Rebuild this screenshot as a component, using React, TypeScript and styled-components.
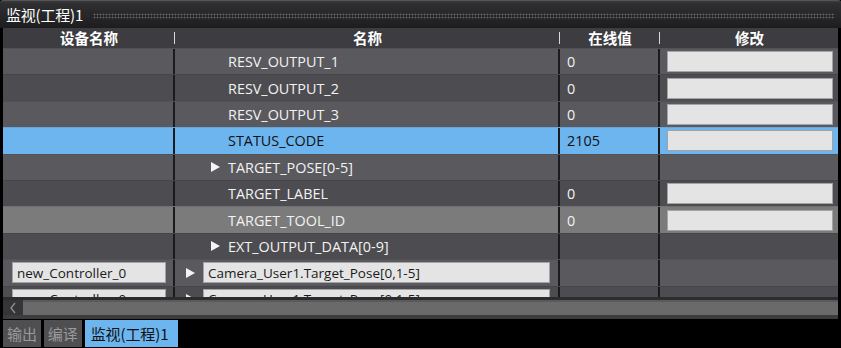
import React from "react";
import styled, { createGlobalStyle, css } from "styled-components";

const Global = createGlobalStyle`
  html, body { margin: 0; padding: 0; background: #000; }
  body { font-family: "Open Sans", "Noto Sans CJK SC", sans-serif; }
  * { box-sizing: border-box; }
`;

const Window = styled.div`
  width: 841px;
  height: 348px;
  background: #000;
  display: flex;
  flex-direction: column;
  overflow: hidden;
`;

const TitleBar = styled.div`
  height: 28px;
  display: flex;
  align-items: center;
  gap: 10px;
  padding: 0 6px 0 6px;
  background: linear-gradient(#3a3a3c 0px, #2e2e30 3px, #262628 16px, #1c1c1e 28px);
  border-top: 1px solid #555;
  border-radius: 3px 3px 0 0;
`;

const TitleText = styled.span`
  color: #fff;
  font-family: "Noto Sans CJK SC", sans-serif;
  font-size: 15px;
  line-height: 1;
  letter-spacing: -0.2px;
  white-space: nowrap;
`;

const Dots = styled.div`
  flex: 1;
  height: 6px;
  margin-top: 2px;
  background-image: radial-gradient(circle, #6a6a6c 0.8px, transparent 1.1px);
  background-size: 3px 3px;
`;

const Grid = styled.div`
  height: 269px;
  margin: 0 3px;
  background: #4d4d51;
  overflow: hidden;
`;

const cols = "172px 385px 100px 179px";

const HeaderRow = styled.div`
  display: grid;
  grid-template-columns: ${cols};
  height: 20px;
  background: #3c3c41;
`;

const HeaderCell = styled.div<{ $sep?: boolean }>`
  position: relative;
  display: flex;
  align-items: center;
  justify-content: center;
  color: #fff;
  font-family: "Noto Sans CJK SC", sans-serif;
  font-weight: 700;
  font-size: 14.5px;
  line-height: 1;
  ${(p) =>
    p.$sep &&
    css`
      &::after {
        content: "";
        position: absolute;
        right: 0;
        top: 4px;
        width: 1px;
        height: 12px;
        background: #d8d8d8;
      }
    `}
`;

type Tone = "light" | "dark" | "sel" | "hover";
const bg: Record<Tone, string> = {
  light: "#5a595e",
  dark: "#4d4d51",
  sel: "#6db5ef",
  hover: "#7b7b7c",
};

const Row = styled.div<{ $tone: Tone }>`
  display: grid;
  grid-template-columns: ${cols};
  height: 26.4px;
  background: ${(p) => bg[p.$tone]};
  color: ${(p) => (p.$tone === "sel" ? "#111" : "#f2f2f2")};
  border-top: 1px solid rgba(0, 0, 0, 0.08);
`;

const Cell = styled.div<{ $divider?: boolean; $indent?: number }>`
  display: flex;
  align-items: center;
  padding-left: ${(p) => p.$indent ?? 7}px;
  font-size: 14.4px;
  white-space: nowrap;
  overflow: hidden;
  ${(p) => p.$divider && css`border-right: 2px solid #1b1b1d;`}
`;

const Arrow = styled.span`
  display: inline-block;
  width: 0;
  height: 0;
  border-top: 5px solid transparent;
  border-bottom: 5px solid transparent;
  border-left: 9px solid #f4f4f4;
  margin-right: 8px;
`;

const Field = styled.div<{ $w?: number }>`
  width: ${(p) => (p.$w ? `${p.$w}px` : "100%")};
  height: 21px;
  background: #e4e4e5;
  border: 1px solid #a3a3a3;
  color: #1a1a1a;
  font-size: 13.5px;
  display: flex;
  align-items: center;
  padding-left: 4px;
`;

const ModCell = styled.div`
  display: flex;
  align-items: center;
  padding: 0 6px 0 7px;
`;

const ScrollBar = styled.div`
  height: 22px;
  margin: 0 3px;
  display: flex;
  background: #3e3e40;
  border-top: 3px solid #2c2c2e;
  border-bottom: 4px solid #3c3c3e;
`;

const ScrollBtn = styled.div`
  width: 20px;
  display: flex;
  align-items: center;
  justify-content: center;
  background: #353537;
`;

const ScrollTrack = styled.div`
  flex: 1;
  background: #6a6a6a;
  border-top: 2px solid #5a5a5a;
`;

const TabBar = styled.div`
  flex: 1;
  display: flex;
  gap: 3px;
  padding: 1px 0 0 3px;
`;

const Tab = styled.div<{ $active?: boolean }>`
  height: 27px;
  padding: ${(p) => (p.$active ? "0 10px 0 6px" : "0 4px")};
  display: flex;
  align-items: center;
  font-family: "Noto Sans CJK SC", sans-serif;
  font-size: 15px;
  letter-spacing: -0.1px;
  background: ${(p) => (p.$active ? "#6db5ef" : "#4f4f52")};
  color: ${(p) => (p.$active ? "#111" : "#9a9a9a")};
`;

type Item = {
  name: string;
  tone: Tone;
  value?: string;
  mod?: boolean;
  arrow?: boolean;
};

const items: Item[] = [
  { name: "RESV_OUTPUT_1", tone: "light", value: "0", mod: true },
  { name: "RESV_OUTPUT_2", tone: "dark", value: "0", mod: true },
  { name: "RESV_OUTPUT_3", tone: "light", value: "0", mod: true },
  { name: "STATUS_CODE", tone: "sel", value: "2105", mod: true },
  { name: "TARGET_POSE[0-5]", tone: "light", arrow: true },
  { name: "TARGET_LABEL", tone: "dark", value: "0", mod: true },
  { name: "TARGET_TOOL_ID", tone: "hover", value: "0", mod: true },
  { name: "EXT_OUTPUT_DATA[0-9]", tone: "dark", arrow: true },
];

export default function App() {
  return (
    <Window>
      <Global />
      <TitleBar>
        <TitleText>监视(工程)1</TitleText>
        <Dots />
      </TitleBar>
      <Grid>
        <HeaderRow>
          <HeaderCell $sep>设备名称</HeaderCell>
          <HeaderCell $sep>名称</HeaderCell>
          <HeaderCell $sep>在线值</HeaderCell>
          <HeaderCell $sep>修改</HeaderCell>
        </HeaderRow>
        {items.map((it) => (
          <Row key={it.name} $tone={it.tone}>
            <Cell $divider />
            <Cell $divider $indent={it.arrow ? 36 : 53}>
              {it.arrow && <Arrow />}
              {it.name}
            </Cell>
            <Cell $divider>{it.value ?? ""}</Cell>
            <ModCell>{it.mod && <Field />}</ModCell>
          </Row>
        ))}
        {[0, 1].map((i) => (
          <Row key={`c${i}`} $tone={i === 0 ? "light" : "dark"}>
            <Cell $divider $indent={9}>
              <Field $w={154}>new_Controller_0</Field>
            </Cell>
            <Cell $divider $indent={11}>
              <Arrow />
              <Field $w={347}>Camera_User1.Target_Pose[0,1-5]</Field>
            </Cell>
            <Cell $divider />
            <ModCell />
          </Row>
        ))}
      </Grid>
      <ScrollBar>
        <ScrollBtn>
          <svg width="8" height="12" viewBox="0 0 8 12">
            <path d="M6 1 L2 6 L6 11" fill="none" stroke="#8c8c8c" strokeWidth="1.4" />
          </svg>
        </ScrollBtn>
        <ScrollTrack />
      </ScrollBar>
      <TabBar>
        <Tab>输出</Tab>
        <Tab>编译</Tab>
        <Tab $active>监视(工程)1</Tab>
      </TabBar>
    </Window>
  );
}
